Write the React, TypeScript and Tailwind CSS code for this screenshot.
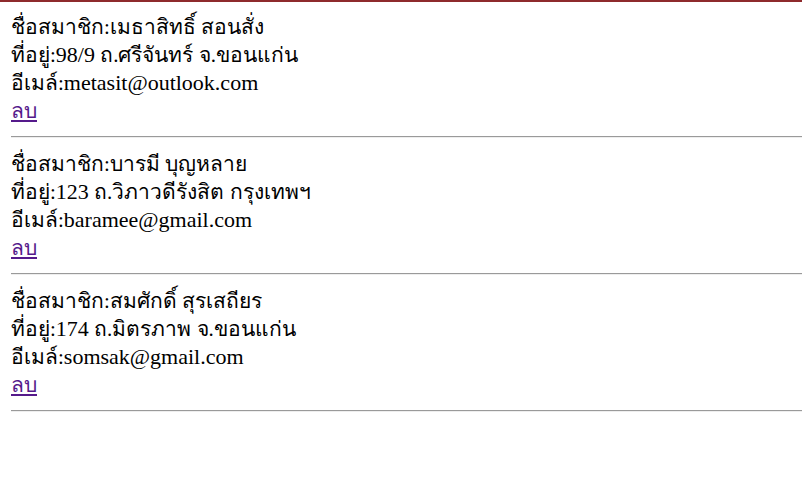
const members = [
  { name: "เมธาสิทธิ์ สอนสั่ง", no: "98/9", road: " ถ.ศรีจันทร์ จ.ขอนแก่น", email: "metasit@outlook.com" },
  { name: "บารมี บุญหลาย", no: "123", road: " ถ.วิภาวดีรังสิต กรุงเทพฯ", email: "baramee@gmail.com" },
  { name: "สมศักดิ์ สุรเสถียร", no: "174", road: " ถ.มิตรภาพ จ.ขอนแก่น", email: "somsak@gmail.com" },
];

// thai glyphs come from the fallback font, which runs a bit wider than the reference's
function Th({ children }: { children: React.ReactNode }) {
  return <span className="text-[21px] leading-[28px]">{children}</span>;
}

export default function App() {
  return (
    <div className="min-h-[486px] bg-white border-t-2 border-[#8e2a2c] pl-[11px] pt-[11px] font-['Liberation_Serif',serif] text-[22px] leading-[28px] text-black">
      {members.map((m) => (
        <div key={m.email}>
          <div><Th>ชื่อสมาชิก:{m.name}</Th></div>
          <div><Th>ที่อยู่:</Th>{m.no}<Th>{m.road}</Th></div>
          <div><Th>อีเมล์:</Th>{m.email}</div>
          <a href="#" className="text-[#551a8b] underline"><Th>ลบ</Th></a>
          <div className="mt-[11px] mb-[12px] h-[2px] border-t border-b border-t-[#9a9a9a] border-b-[#eeeeee]" />
        </div>
      ))}
    </div>
  );
}
